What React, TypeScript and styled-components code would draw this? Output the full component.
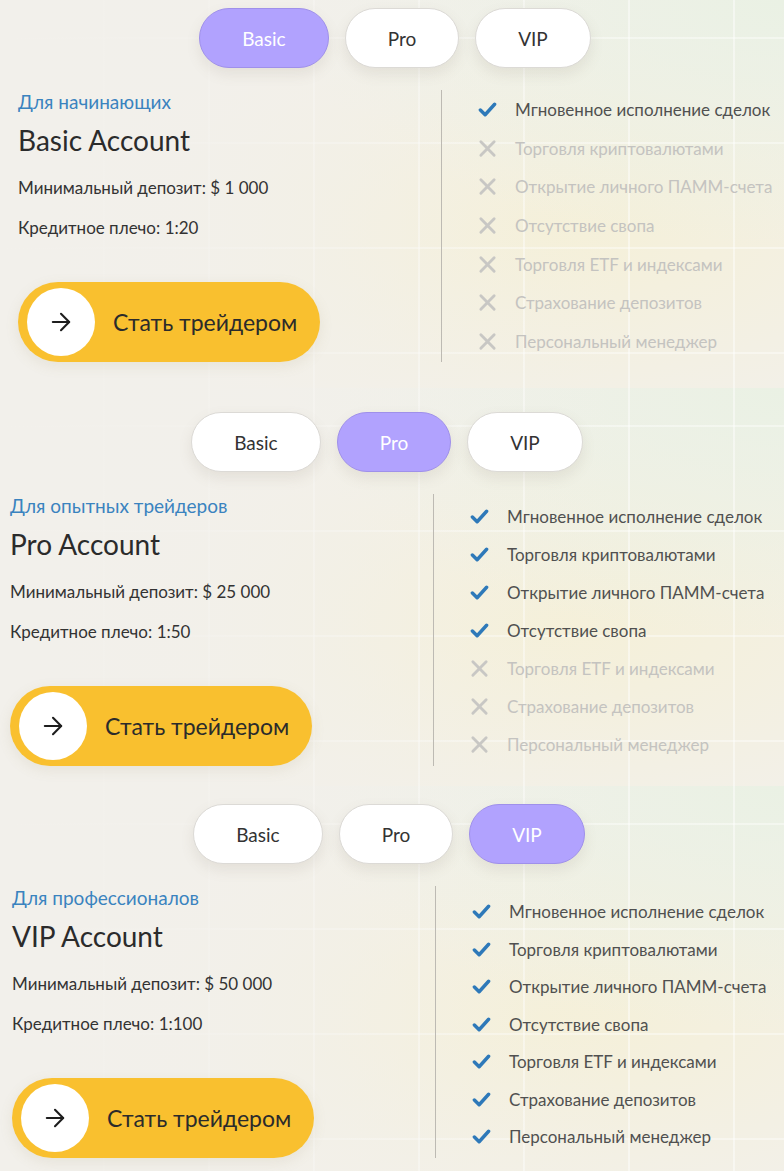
import React from "react";
import styled, { createGlobalStyle } from "styled-components";
import { ArrowRight } from "lucide-react";

const Global = createGlobalStyle`
  html, body { margin: 0; padding: 0; }
  body {
    background: #f1efe9;
    font-family: Lato, "Noto Sans", sans-serif;
    color: #333;
  }
  * { box-sizing: border-box; }
`;

type Plan = {
  tab: string;
  label: string;
  title: string;
  deposit: string;
  leverage: string;
  enabled: number;
  shift: number;
  top: number;
  height: number;
  rowH: number;
  listTop: number;
};

const FEATURES = [
  "Мгновенное исполнение сделок",
  "Торговля криптовалютами",
  "Открытие личного ПАММ-счета",
  "Отсутствие свопа",
  "Торговля ETF и индексами",
  "Страхование депозитов",
  "Персональный менеджер",
];

const PLANS: Plan[] = [
  { tab: "Basic", label: "Для начинающих", title: "Basic Account", deposit: "$ 1 000", leverage: "1:20", enabled: 1, shift: 18, top: 8, height: 388, rowH: 38.7, listTop: 0 },
  { tab: "Pro", label: "Для опытных трейдеров", title: "Pro Account", deposit: "$ 25 000", leverage: "1:50", enabled: 4, shift: 10, top: 24, height: 398, rowH: 38, listTop: 3 },
  { tab: "VIP", label: "Для профессионалов", title: "VIP Account", deposit: "$ 50 000", leverage: "1:100", enabled: 7, shift: 12, top: 18, height: 385, rowH: 37.5, listTop: 7 },
];

const TABS = ["Basic", "Pro", "VIP"];

const Panel = styled.section<{ $shift: number; $top: number; $h: number }>`
  height: ${(p) => p.$h}px;
  padding-top: ${(p) => p.$top}px;
  padding-left: ${(p) => p.$shift}px;
  overflow: hidden;
  background:
    linear-gradient(90deg, rgba(242,240,235,1) 0%, rgba(242,240,235,0.8) 25%, rgba(242,240,235,0.2) 60%, rgba(242,240,235,0) 80%),
    repeating-linear-gradient(90deg, transparent 0 103px, rgba(255,255,255,0.45) 103px 105px),
    repeating-linear-gradient(180deg, transparent 0 37px, rgba(255,255,255,0.4) 37px 39px, transparent 39px 105px),
    radial-gradient(ellipse at 100% 0%, #eaf1e4 0%, rgba(234,241,228,0) 45%),
    radial-gradient(ellipse at 70% 60%, #f5f0d8 0%, rgba(245,240,216,0) 65%),
    #f2f0ea;
`;

const Inner = styled.div`
  width: 754px;
`;

const TabRow = styled.div`
  display: flex;
  justify-content: center;
  gap: 16px;
`;

const Tab = styled.button<{ $active: boolean }>`
  height: 60px;
  padding: 0 42px;
  border-radius: 30px;
  font-family: Lato, "Noto Sans", sans-serif;
  font-size: 19px;
  cursor: pointer;
  border: 1px solid ${(p) => (p.$active ? "#9f90ea" : "#dcdad6")};
  background: ${(p) => (p.$active ? "#b1a2fe" : "#ffffff")};
  color: ${(p) => (p.$active ? "#ffffff" : "#333333")};
  box-shadow: 0 6px 14px rgba(120, 110, 90, 0.12);
`;

const Body = styled.div`
  display: grid;
  grid-template-columns: 424px 1fr;
  margin-top: 22px;
`;

const Left = styled.div`
  border-right: 1px solid #bdbab3;
  height: 272px;
  display: flex;
  flex-direction: column;
  align-items: flex-start;
`;

const Label = styled.div`
  font-size: 19px;
  line-height: 24px;
  color: #3a83bf;
`;

const Title = styled.h2`
  margin: 8px 0 0;
  font-size: 28px;
  font-weight: 400;
  line-height: 36px;
  color: #2b2b2b;
`;

const Info = styled.p<{ $gap: number }>`
  margin: ${(p) => p.$gap}px 0 0;
  font-size: 17px;
  line-height: 24px;
  color: #333;
`;

const CTA = styled.button`
  margin-top: 42px;
  width: 302px;
  height: 80px;
  border: none;
  border-radius: 40px;
  background: #f9c02f;
  padding: 0 0 0 9px;
  display: flex;
  align-items: center;
  gap: 18px;
  cursor: pointer;
  box-shadow: 0 4px 14px rgba(150, 130, 80, 0.12);
  font-family: Lato, "Noto Sans", sans-serif;
  font-size: 23px;
  color: #2b2b2b;
`;

const Circle = styled.span`
  width: 68px;
  height: 68px;
  border-radius: 50%;
  background: #fff;
  display: flex;
  align-items: center;
  justify-content: center;
  flex-shrink: 0;
  color: #1e1e1e;
`;

const List = styled.ul<{ $top: number }>`
  list-style: none;
  margin: 0;
  padding: ${(p) => p.$top}px 0 0 36px;
  white-space: nowrap;
`;

const Item = styled.li<{ $on: boolean; $h: number }>`
  height: ${(p) => p.$h}px;
  display: flex;
  align-items: center;
  gap: 18px;
  font-size: 17px;
  color: ${(p) => (p.$on ? "#505050" : "#c4c3c0")};
`;

const IconBox = styled.span`
  width: 19px;
  height: 19px;
  display: flex;
  flex-shrink: 0;
`;

const Check = () => (
  <svg width="19" height="19" viewBox="0 0 20 20">
    <path d="M2.5 10.5 L7.5 15.5 L17.5 4.5" fill="none" stroke="#2e79b9" strokeWidth="3.6" strokeLinecap="round" strokeLinejoin="round" />
  </svg>
);

const Cross = () => (
  <svg width="19" height="19" viewBox="0 0 20 20">
    <path d="M3 3 L17 17 M17 3 L3 17" fill="none" stroke="#c8c7c4" strokeWidth="3" strokeLinecap="round" />
  </svg>
);

export default function App() {
  return (
    <>
      <Global />
      {PLANS.map((p) => (
        <Panel key={p.tab} $shift={p.shift} $top={p.top} $h={p.height}>
          <Inner>
            <TabRow>
              {TABS.map((t) => (
                <Tab key={t} $active={t === p.tab}>{t}</Tab>
              ))}
            </TabRow>
            <Body>
              <Left>
                <Label>{p.label}</Label>
                <Title>{p.title}</Title>
                <Info $gap={18}>Минимальный депозит: {p.deposit}</Info>
                <Info $gap={16}>Кредитное плечо: {p.leverage}</Info>
                <CTA>
                  <Circle>
                    <ArrowRight size={28} strokeWidth={1.8} />
                  </Circle>
                  Стать трейдером
                </CTA>
              </Left>
              <List $top={p.listTop}>
                {FEATURES.map((f, i) => {
                  const on = i < p.enabled;
                  return (
                    <Item key={f} $on={on} $h={p.rowH}>
                      <IconBox>{on ? <Check /> : <Cross />}</IconBox>
                      {f}
                    </Item>
                  );
                })}
              </List>
            </Body>
          </Inner>
        </Panel>
      ))}
    </>
  );
}
